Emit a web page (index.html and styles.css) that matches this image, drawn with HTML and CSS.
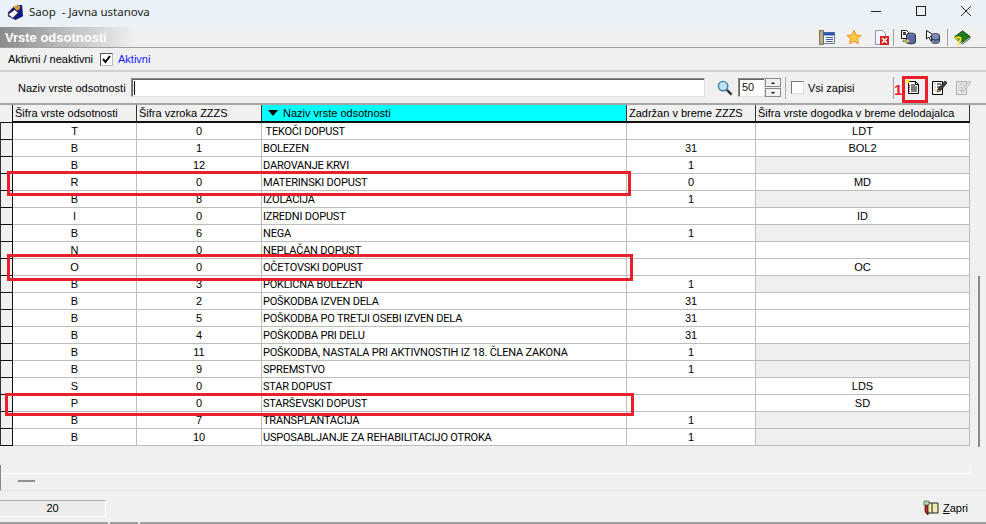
FILE: index.html
```html
<!DOCTYPE html>
<html lang="sl">
<head>
<meta charset="utf-8">
<title>Saop</title>
<link rel="stylesheet" href="styles.css">
</head>
<body>
<div class="window">
  <div class="titlebar">
    <svg class="app-icon" width="17" height="17" viewBox="0 0 18 18"><path d="M1 9 L7 3 L9 5 L11 1 L16 1 L17 13 L9 17 L1 13 Z" fill="#141a80"/><path d="M7 3l2-2 1 3 2-3 2 1-1 4-3 1z" fill="#e8a020"/><path d="M1 11 L8 6 L12 9 L6 15 Z" fill="#f4f4f4" stroke="#222" stroke-width=".7"/></svg>
    <span class="app-title">Saop&nbsp; - Javna ustanova</span>
    <div class="winbtns">
      <svg width="10" height="10" viewBox="0 0 10 10"><path d="M0 5.500h10" stroke="#222" stroke-width="1"/></svg>
      <svg width="10" height="10" viewBox="0 0 10 10"><rect x=".5" y=".5" width="9" height="9" fill="none" stroke="#222"/></svg>
      <svg width="10" height="10" viewBox="0 0 10 10"><path d="M0 0l10 10M10 0L0 10" stroke="#222" stroke-width="1"/></svg>
    </div>
  </div>

  <div class="header">
    <span class="header-title">Vrste odsotnosti</span>
    <div class="tools">
      <svg class="t1" width="16" height="15" viewBox="0 0 16 15"><rect x=".5" y=".5" width="4" height="14" fill="#b8ab7c" stroke="#6b6440" stroke-width=".8"/><rect x="4.500" y="2.500" width="11" height="11" fill="#fff" stroke="#44608f" stroke-width=".8"/><rect x="4.500" y="2.500" width="11" height="3" fill="#2a4fb0"/><path d="M7 7.500h7M7 9.500h7M7 11.500h7" stroke="#3b5c98"/></svg>
      <svg class="t2" width="16" height="16" viewBox="0 0 18 17"><path d="M9 1l2.400 5.200 5.600.6-4.200 3.800 1.200 5.600L9 13.300l-5 2.900 1.200-5.600L1 6.800l5.600-.6z" fill="#ffc93c" stroke="#e88a20"/></svg>
      <svg class="t3" width="14" height="15" viewBox="0 0 14 15"><path d="M.5.500h7l3 3v11h-10z" fill="#f4f6fb" stroke="#8a97b5"/><rect x="5" y="6" width="9" height="9" fill="#d8201c"/><path d="M7 8l5 5M12 8l-5 5" stroke="#fff" stroke-width="1.500"/></svg>
      <i class="sep s1"></i>
      <svg class="t4" width="15" height="15" viewBox="0 0 15 15"><path d="M.5.500h5l2 2v6h-7z" fill="#fff" stroke="#111"/><path d="M2 2h3v3H2z" fill="#444"/><ellipse cx="10" cy="5" rx="4.500" ry="2" fill="#6a78b8" stroke="#111" stroke-width=".7"/><path d="M5.500 5v7c0 2.400 9 2.400 9 0V5" fill="#5a68a8" stroke="#111" stroke-width=".8"/><path d="M2 10h4V8l3 3-3 3v-2H2z" fill="#d8c860" stroke="#555" stroke-width=".5"/></svg>
      <svg class="t5" width="14" height="14" viewBox="0 0 14 14"><path d="M.5.500l7 4.500-3 1 2 3.500-2 1-1.500-3.500-2.500 2z" fill="#fff" stroke="#111"/><ellipse cx="9.500" cy="5.500" rx="4" ry="2" fill="#8a94c8" stroke="#111" stroke-width=".7"/><path d="M5.500 5.500v6c0 2.400 8 2.400 8 0v-6" fill="#7a88c0" stroke="#111" stroke-width=".8"/><path d="M6 9c2 1.500 6 1.500 7.500 0" fill="none" stroke="#222"/></svg>
      <i class="sep s2"></i>
      <svg class="t6" width="17" height="17" viewBox="0 0 18 18"><path d="M1 8l8-6 8 6-8 6z" fill="#1f7a1f" stroke="#0c3c0c"/><path d="M1 8v2l8 6 8-6V8l-8 6z" fill="#c8d8c0" stroke="#0c3c0c" stroke-width=".7"/><path d="M2 11c0-3 5-3 5 0 0 2-2 2-2 3.500" fill="none" stroke="#f0e010" stroke-width="2"/><rect x="4" y="15.500" width="2" height="2" fill="#f0e010"/></svg>
    </div>
  </div>

  <div class="filter">
    <span class="filter-label">Aktivni / neaktivni</span>
    <span class="check check-on"><svg width="9" height="9" viewBox="0 0 9 9"><path d="M1 4l2.500 3L8 1" fill="none" stroke="#000" stroke-width="2"/></svg></span>
    <span class="filter-link">Aktivni</span>
  </div>

  <div class="search">
    <span class="search-label">Naziv vrste odsotnosti</span>
    <span class="input name-input"><i class="caret"></i></span>
    <svg class="lens" width="16" height="16" viewBox="0 0 17 17"><circle cx="6.500" cy="6.500" r="5" fill="#bfe3f5" stroke="#3d7ea6" stroke-width="1.500"/><path d="M10.500 10.500l5 5" stroke="#333" stroke-width="2.500"/></svg>
    <span class="input num-input">50</span>
    <span class="spin"><b class="spin-up"></b><b class="spin-down"></b></span>
    <i class="sep s3"></i>
    <span class="check"></span>
    <span class="vsi">Vsi zapisi</span>
    <i class="sep s4"></i>
    <span class="one">1</span>
    <svg class="b1" width="15" height="15" viewBox="0 0 15 15"><path d="M3.500 2.500h7l3 3v9h-10z" fill="#fff" stroke="#000"/><path d="M6 6h4M6 8h6M6 10h6M6 12h6" stroke="#000"/><path d="M4.500 6v7" stroke="#c33" stroke-dasharray="1 1"/><path d="M10.500 2.500v3h3" fill="none" stroke="#000"/><path d="M3 0l.7 1.500L5.500 1 4.300 2.500 5.500 4 3.700 3.500 3 5l-.7-1.500L.5 4l1.200-1.500L.5 1l1.800.5z" fill="#ffea00"/></svg>
    <svg class="b2" width="15" height="15" viewBox="0 0 15 15"><path d="M.5 1.500h10v13H.5z" fill="#fff" stroke="#000"/><path d="M2.500 4h1M2.500 7h1M2.500 10h1" stroke="#c33"/><path d="M5 4h4M5 7h3M5 10h2" stroke="#000"/><path d="M13 1l2 2-7 8-3 1 1-3z" fill="#444" stroke="#000" stroke-width=".7"/><path d="M5 12l1-3 2 2z" fill="#e08830"/></svg>
    <svg class="b3" width="15" height="15" viewBox="0 0 15 15"><path d="M.5 1.500h10v13H.5z" fill="#e8e8e8" stroke="#b0b0b0"/><path d="M3 4h5M3 7h3M3 10h2" stroke="#bbb"/><path d="M13 1l2 2-7 8-3 1 1-3z" fill="#ddd" stroke="#aaa" stroke-width=".7"/></svg>
  </div>

  <div class="grid-area">
    <table class="grid">
      <colgroup><col class="c0"><col class="c1"><col class="c2"><col class="c3"><col class="c4"><col class="c5"></colgroup>
      <thead>
        <tr>
          <th class="ind"></th>
          <th>Šifra vrste odsotnosti</th>
          <th>Šifra vzroka ZZZS</th>
          <th class="sorted"><span class="arrow"></span>Naziv vrste odsotnosti</th>
          <th>Zadržan v breme ZZZS</th>
          <th>Šifra vrste dogodka v breme delodajalca</th>
        </tr>
      </thead>
      <tbody>
        <tr><td class="ind"></td><td>T</td><td>0</td><td class="name">&nbsp;TEKOČI DOPUST</td><td></td><td>LDT</td></tr>
        <tr><td class="ind"></td><td>B</td><td>1</td><td class="name">BOLEZEN</td><td>31</td><td>BOL2</td></tr>
        <tr><td class="ind"></td><td>B</td><td>12</td><td class="name">DAROVANJE KRVI</td><td>1</td><td class="off"></td></tr>
        <tr><td class="ind"></td><td>R</td><td>0</td><td class="name">MATERINSKI DOPUST</td><td>0</td><td>MD</td></tr>
        <tr><td class="ind"></td><td>B</td><td>8</td><td class="name">IZOLACIJA</td><td>1</td><td class="off"></td></tr>
        <tr><td class="ind"></td><td>I</td><td>0</td><td class="name">IZREDNI DOPUST</td><td></td><td>ID</td></tr>
        <tr><td class="ind"></td><td>B</td><td>6</td><td class="name">NEGA</td><td>1</td><td class="off"></td></tr>
        <tr><td class="ind"></td><td>N</td><td>0</td><td class="name">NEPLAČAN DOPUST</td><td></td><td></td></tr>
        <tr><td class="ind"></td><td>O</td><td>0</td><td class="name">OČETOVSKI DOPUST</td><td></td><td>OC</td></tr>
        <tr><td class="ind"></td><td>B</td><td>3</td><td class="name">POKLICNA BOLEZEN</td><td>1</td><td class="off"></td></tr>
        <tr><td class="ind"></td><td>B</td><td>2</td><td class="name">POŠKODBA IZVEN DELA</td><td>31</td><td></td></tr>
        <tr><td class="ind"></td><td>B</td><td>5</td><td class="name">POŠKODBA PO TRETJI OSEBI IZVEN DELA</td><td>31</td><td></td></tr>
        <tr><td class="ind"></td><td>B</td><td>4</td><td class="name">POŠKODBA PRI DELU</td><td>31</td><td></td></tr>
        <tr><td class="ind"></td><td>B</td><td>11</td><td class="name">POŠKODBA, NASTALA PRI AKTIVNOSTIH IZ 18. ČLENA ZAKONA</td><td>1</td><td class="off"></td></tr>
        <tr><td class="ind"></td><td>B</td><td>9</td><td class="name">SPREMSTVO</td><td>1</td><td class="off"></td></tr>
        <tr><td class="ind"></td><td>S</td><td>0</td><td class="name">STAR DOPUST</td><td></td><td>LDS</td></tr>
        <tr><td class="ind"></td><td>P</td><td>0</td><td class="name">STARŠEVSKI DOPUST</td><td></td><td>SD</td></tr>
        <tr><td class="ind"></td><td>B</td><td>7</td><td class="name">TRANSPLANTACIJA</td><td>1</td><td class="off"></td></tr>
        <tr><td class="ind"></td><td>B</td><td>10</td><td class="name">USPOSABLJANJE ZA REHABILITACIJO OTROKA</td><td>1</td><td class="off"></td></tr>
      </tbody>
    </table>
    <i class="vscroll"></i>
  </div>

  <div class="hbar">
    <i class="htrack"></i>
    <i class="hthumb"></i>
  </div>

  <div class="footer">
    <span class="count">20</span>
    <span class="close-btn">
      <svg width="16" height="16" viewBox="0 0 16 16"><path d="M3 3h12v10H5z" fill="#f3ecb0" stroke="#222"/><path d="M9 3v10" stroke="#222"/><path d="M2 4l3 0 0 11-3-3z" fill="#a8332c" stroke="#300" stroke-width=".7"/><path d="M1 1h5v4H1z" fill="#b8dcb0" stroke="#355" stroke-width=".7"/></svg>
      <span><u>Z</u>apri</span>
    </span>
  </div>
  <div class="statusline"><i class="seg1"></i><i class="seg2"></i><i class="seg3"></i></div>

  <i class="mark m1"></i>
  <i class="mark m2"></i>
  <i class="mark m3"></i>
  <i class="mark m4"></i>
</div>
</body>
</html>
```

FILE: styles.css
```css
* { box-sizing: border-box; }
html, body { margin: 0; padding: 0; }
body { font-family: "Liberation Sans", Arial, sans-serif; font-size: 11px; color: #000; background: #f0f0f0; }
i { display: block; }

.window { position: relative; width: 986px; height: 524px; overflow: hidden; background: #f0f0f0; }

.titlebar { height: 27px; display: flex; align-items: flex-start; background: #eaf2f8; padding: 4px 15px 0 7px; }
.app-icon { margin-right: 5px; }
.app-title { font: 11.5px/16px "Noto Sans", sans-serif; color: #222; }
.winbtns { margin-left: auto; margin-top: 2px; display: flex; gap: 35px; }

.header { height: 21px; display: flex; align-items: center; padding-left: 5px; background: linear-gradient(90deg, #8a8a8a 0, #c0c0c0 70px, #f0f0f0 135px); border-bottom: 1px solid #a0a0a0; }
.header-title { font-weight: 700; font-size: 13px; color: #fff; }
.tools { margin-left: auto; display: flex; align-items: center; padding-right: 15px; }
.t2 { margin-left: 11px; }
.t3 { margin-left: 13px; }
.sep { width: 1px; background: #a0a0a0; }
.s1 { margin-left: 4px; height: 17px; }
.t4 { margin-left: 7px; }
.t5 { margin-left: 10px; }
.s2 { margin-left: 7px; height: 17px; }
.t6 { margin-left: 6px; }

.filter { height: 24px; display: flex; align-items: center; padding-left: 8px; border-bottom: 2px solid #d0d0d0; }
.filter-label { width: 92px; }
.filter-link { color: #1a1aff; margin-left: 5px; }

.check { width: 13px; height: 13px; display: flex; align-items: center; justify-content: center; background: #fff; border: 1px solid #777; border-right-color: #ddd; border-bottom-color: #ddd; }
.check-on { border-color: #555; border-right-color: #bbb; border-bottom-color: #bbb; }

.search { height: 31px; display: flex; align-items: center; padding-left: 18px; }
.search-label { width: 113px; }
.input { display: block; height: 19px; background: #fff; border: 1px solid #888; border-right-color: #ddd; border-bottom-color: #ddd; box-shadow: inset 1px 1px 0 #666; }
.name-input { width: 574px; padding: 2px 0 0 2px; }
.caret { width: 1px; height: 14px; background: #000; }
.lens { margin-left: 12px; }
.num-input { width: 27px; margin-left: 5px; padding: 2px 0 0 3px; font-size: 11px; color: #111; }
.spin { width: 16px; height: 19px; display: flex; flex-direction: column; gap: 1px; }
.spin b { display: block; flex: 1; background: #f0f0f0; border: 1px solid #888; position: relative; }
.spin-up::after, .spin-down::after { content: ""; position: absolute; left: 5px; width: 0; height: 0; border-left: 2px solid transparent; border-right: 2px solid transparent; }
.spin-up::after { top: 3px; border-bottom: 2px solid #000; }
.spin-down::after { top: 3px; border-top: 2px solid #000; }
.s3 { margin-left: 4px; margin-right: 5px; height: 22px; background: #b0b0b0; }
.vsi { margin-left: 4px; width: 85px; }
.s4 { height: 22px; }
.one { width: 10px; margin-left: -1px; padding-left: 1px; margin-top: 3px; font: 700 15px "Liberation Sans", sans-serif; color: #e8202c; }
.b1 { margin-left: 2px; margin-top: -2px; }
.b2 { margin-left: 12px; }
.b3 { margin-left: 9px; }

.grid-area { position: relative; height: 362px; border-top: 2px solid #a6a6a6; }
.grid { table-layout: fixed; width: 970px; border-collapse: separate; border-spacing: 0; background: #fff; }
.c0 { width: 13px; } .c1 { width: 124px; } .c2 { width: 125px; } .c3 { width: 365px; } .c4 { width: 129px; } .c5 { width: 214px; }
.grid th { height: 18px; padding: 0 0 0 2px; font-weight: 400; text-align: left; white-space: nowrap; overflow: hidden; background: #f0f0f0; border-right: 1px solid #333; border-bottom: 2px solid #111; }
.grid td { height: 17px; padding: 0; text-align: center; white-space: nowrap; overflow: hidden; border-right: 1px solid #bdbdbd; border-bottom: 1px solid #bdbdbd; line-height: 15px; }
.grid td.name { text-align: left; padding-left: 1px; font-family: Roboto, "Liberation Sans", sans-serif; letter-spacing: -0.2px; }
.grid td.off { background: #efefef; }
.grid td.ind, .grid th.ind { background: #f0f0f0; border-right: 1px solid #111; border-bottom: 1px solid #111; }
.grid td.ind { border-left: 1px solid #333; }
.grid th.sorted { background: #00ffff; padding-left: 6px; }
.arrow { display: inline-block; width: 0; height: 0; margin-right: 5px; vertical-align: 1px; border-left: 5px solid transparent; border-right: 5px solid transparent; border-top: 6px solid #000; }
.vscroll { position: absolute; left: 978px; top: 171px; width: 2px; height: 171px; background: #8a8a8a; }

.hbar { height: 26px; border-left: 1px solid #888; border-bottom: 1px solid #e4e4e4; }
.htrack { width: 970px; height: 9px; border-bottom: 1px solid #fff; border-right: 1px solid #fff; }
.hthumb { width: 17px; height: 2px; margin: 6px 0 0 17px; background: #909090; }

.footer { height: 31px; display: flex; align-items: flex-start; justify-content: space-between; padding: 9px 18px 0 0; }
.count { width: 106px; height: 17px; line-height: 15px; text-align: center; background: #ececec; border: 1px solid #a8a8a8; border-right-color: #fff; border-bottom-color: #fff; border-left: 0; }
.close-btn { display: flex; align-items: center; gap: 4px; line-height: 16px; }

.statusline { height: 2px; display: flex; gap: 2px; }
.statusline i { background: #a0a0a0; height: 2px; }
.seg1 { width: 108px; }
.seg2 { width: 28px; }
.seg3 { flex: 1; }

.mark { position: absolute; border: 3px solid #e8202c; }
.m1 { left: 7px; top: 171px; width: 624px; height: 25px; }
.m2 { left: 7px; top: 254px; width: 626px; height: 27px; }
.m3 { left: 5px; top: 393px; width: 629px; height: 23px; }
.m4 { left: 902px; top: 76px; width: 26px; height: 27px; }
```
